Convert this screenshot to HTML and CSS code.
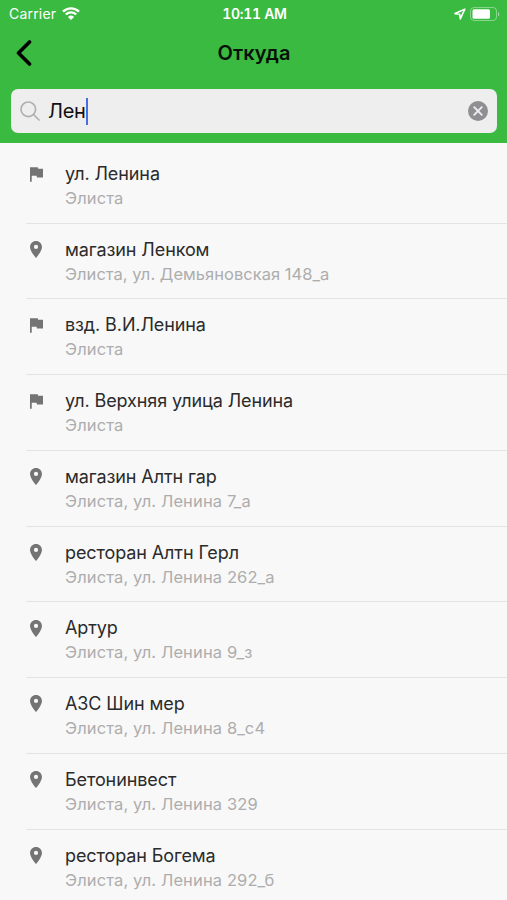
FILE: index.html
```html
<!DOCTYPE html>
<html lang="ru">
<head>
<meta charset="utf-8">
<title>Откуда</title>
<link rel="stylesheet" href="styles.css">
</head>
<body>
<svg width="0" height="0" class="defs">
  <symbol id="flag" viewBox="5 4 15 17"><path d="M14.4 6 14 4H5v17h2v-7h5.600l.4 2h7V6z"/></symbol>
  <symbol id="pin" viewBox="5 2 14 20"><path d="M12 2C8.130 2 5 5.130 5 9c0 5.250 7 13 7 13s7-7.750 7-13c0-3.870-3.130-7-7-7zm0 9.500a2.500 2.500 0 1 1 0-5 2.500 2.500 0 0 1 0 5z"/></symbol>
</svg>
<header class="header">
  <div class="status">
    <div class="carrier"><span>Carrier</span>
      <svg class="wifi" viewBox="0 0 18 13"><path d="M1 4.700a11.500 11.500 0 0 1 16 0M3.800 7.500a7.500 7.500 0 0 1 10.400 0" fill="none" stroke="#fff" stroke-width="2.300"/><path d="M9 13 5.900 9.900a4.500 4.500 0 0 1 6.200 0z" fill="#fff"/></svg>
    </div>
    <div class="time">10:11 AM</div>
    <div class="power">
      <svg class="location" viewBox="0 0 12 12"><path d="M10.800 1.200 1 5.600l4.700.6.600 4.700z" fill="none" stroke="#fff" stroke-width="1.600" stroke-linejoin="round"/></svg>
      <svg class="battery" viewBox="0 0 30 14"><rect x=".5" y=".5" width="26" height="13" rx="3.500" fill="none" stroke="#fff" stroke-opacity=".4"/><rect x="2.500" y="2.300" width="17.500" height="9.400" rx="1.500" fill="#fff"/><path d="M28 5v4.400c1.800-.8 1.800-3.600 0-4.400z" fill="#fff" fill-opacity=".5"/></svg>
    </div>
  </div>
  <div class="navbar">
    <svg class="back" viewBox="0 0 16 26"><path d="M13.500 2 2.500 13l11 11" fill="none" stroke="#000" stroke-width="3.600" stroke-linecap="round" stroke-linejoin="round"/></svg>
    <h1 class="title">Откуда</h1>
  </div>
  <div class="search">
    <svg class="glass" viewBox="0 0 20 20"><circle cx="8.300" cy="8.300" r="7.300"/><path d="m13.500 13.500 5.500 5.500"/></svg>
    <span class="query">Лен</span><i class="caret"></i>
    <svg class="clear" viewBox="0 0 20 20"><circle cx="10" cy="10" r="10" fill="#8e8e93"/><path d="m6.200 6.200 7.600 7.600m0-7.600-7.600 7.600" stroke="#efefef" stroke-width="1.900" stroke-linecap="round"/></svg>
  </div>
</header>
<main class="list">
  <div class="row"><svg class="flag"><use href="#flag"/></svg><div><p class="name">ул. Ленина</p><p class="place">Элиста</p></div></div>
  <div class="row"><svg class="pin"><use href="#pin"/></svg><div><p class="name">магазин Ленком</p><p class="place long">Элиста, ул. Демьяновская 148_а</p></div></div>
  <div class="row"><svg class="flag"><use href="#flag"/></svg><div><p class="name">взд. В.И.Ленина</p><p class="place">Элиста</p></div></div>
  <div class="row"><svg class="flag"><use href="#flag"/></svg><div><p class="name">ул. Верхняя улица Ленина</p><p class="place">Элиста</p></div></div>
  <div class="row"><svg class="pin"><use href="#pin"/></svg><div><p class="name">магазин Алтн гар</p><p class="place">Элиста, ул. Ленина 7_а</p></div></div>
  <div class="row"><svg class="pin"><use href="#pin"/></svg><div><p class="name">ресторан Алтн Герл</p><p class="place">Элиста, ул. Ленина 262_а</p></div></div>
  <div class="row"><svg class="pin"><use href="#pin"/></svg><div><p class="name">Артур</p><p class="place">Элиста, ул. Ленина 9_з</p></div></div>
  <div class="row"><svg class="pin"><use href="#pin"/></svg><div><p class="name">АЗС Шин мер</p><p class="place">Элиста, ул. Ленина 8_с4</p></div></div>
  <div class="row"><svg class="pin"><use href="#pin"/></svg><div><p class="name">Бетонинвест</p><p class="place">Элиста, ул. Ленина 329</p></div></div>
  <div class="row"><svg class="pin"><use href="#pin"/></svg><div><p class="name">ресторан Богема</p><p class="place">Элиста, ул. Ленина 292_б</p></div></div>
</main>
</body>
</html>
```
FILE: styles.css
```css
* { box-sizing: border-box; margin: 0; padding: 0; }
body { width: 507px; height: 900px; overflow: hidden; background: #f8f8f8; font-family: Inter, "Liberation Sans", sans-serif; }
svg { display: block; flex: none; }
.defs { display: none; }
.header { height: 142.500px; background: #3aba40; }
.status { height: 27px; padding: 0 7px 0 9px; display: grid; grid-template-columns: 1fr auto 1fr; align-items: center; color: #fff; }
.carrier { display: flex; align-items: center; gap: 6px; font-size: 14px; letter-spacing: .2px; }
.wifi { width: 18px; height: 13px; }
.time { font-size: 14px; font-weight: 600; letter-spacing: -.3px; font-variant-numeric: tabular-nums; }
.power { display: flex; align-items: center; justify-content: flex-end; gap: 4px; }
.location { width: 12px; height: 12px; }
.battery { width: 30px; height: 14px; }
.navbar { height: 62px; padding: 0 15px 0 16px; display: grid; grid-template-columns: 1fr auto 1fr; align-items: center; }
.navbar .back { width: 16px; height: 26px; margin-bottom: 11px; }
.title { font-size: 20px; font-weight: 600; line-height: 26px; letter-spacing: .1px; margin-bottom: 11px; color: #071007; }
.search { height: 44px; margin: 0 10px 0 10.500px; padding: 0 9px 0 9.500px; display: flex; align-items: center; background: #efeeee; border-radius: 7px; }
.glass { width: 20px; height: 20px; margin-right: 8px; fill: none; stroke: #b0b0b3; stroke-width: 1.700; stroke-linecap: round; }
.query { font-size: 20px; letter-spacing: -.3px; color: #111; }
.caret { width: 2px; height: 27px; background: #4b6de0; }
.clear { width: 20px; height: 20px; margin-left: auto; }
.list { padding-top: 5.300px; }
.row { height: 75.750px; margin-left: 26px; padding: 14.200px 0 0 4px; display: flex; align-items: flex-start; border-bottom: 1px solid #e3e3e3; }
.row:last-child { border-bottom: 0; }
.flag { width: 13px; height: 15px; margin: 4.700px 22px 0 0; fill: #747474; }
.pin { width: 12px; height: 17px; margin: 3.200px 23px 0 0; fill: #747474; }
.name { font-size: 18px; line-height: 24px; letter-spacing: -.1px; color: #2b2b2b; white-space: nowrap; }
.place { font-size: 16.500px; line-height: 24px; letter-spacing: .12px; color: #adadad; white-space: nowrap; }
.place.long { letter-spacing: .03px; }
```
